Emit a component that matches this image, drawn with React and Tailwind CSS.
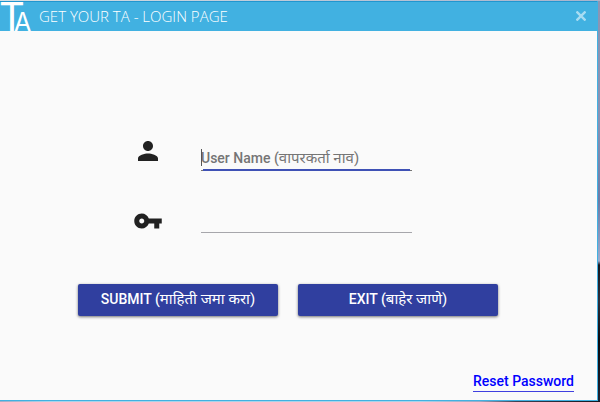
import React from "react";

function PersonIcon() {
  return (
    <svg viewBox="0 0 24 24" className="size-[30px] fill-[#212121]" aria-hidden="true">
      <path d="M12 12c2.21 0 4-1.79 4-4s-1.79-4-4-4-4 1.79-4 4 1.79 4 4 4zm0 2c-2.67 0-8 1.34-8 4v2h16v-2c0-2.66-5.33-4-8-4z" />
    </svg>
  );
}

function KeyIcon() {
  return (
    <svg viewBox="0 0 24 24" className="size-[30px] fill-[#212121]" aria-hidden="true">
      <path d="M12.65 10C11.83 7.67 9.61 6 7 6c-3.31 0-6 2.69-6 6s2.69 6 6 6c2.61 0 4.83-1.67 5.65-4H17v4h4v-4h2v-4H12.65zM7 14c-1.1 0-2-.9-2-2s.9-2 2-2 2 .9 2 2-.9 2-2 2z" />
    </svg>
  );
}

function Logo() {
  return (
    <svg viewBox="0 0 32 29" className="h-[29px] w-8 overflow-visible fill-white font-[Inter,sans-serif]" role="img" aria-label="TA">
      <text x="-1" y="29" fontSize="40">T</text>
      <text x="14" y="29" fontSize="25">A</text>
    </svg>
  );
}

function TitleBar() {
  return (
    <header className="flex h-[30px] items-center border-t border-[#2196cf] bg-[#41b1e1]">
      <Logo />
      <h1 className="ml-[7px] flex-1 pb-0.5 font-['Open_Sans','Noto_Sans',sans-serif] text-[15px] font-light leading-5 text-white">
        GET YOUR TA - LOGIN PAGE
      </h1>
      <button type="button" aria-label="Close" className="mr-2 flex size-4 items-center justify-center pb-0.5">
        <svg viewBox="0 0 10 10" className="size-2.5 stroke-[#a8dcf2]" strokeWidth="2.4" fill="none">
          <path d="M0.5 0.5L9.5 9.5M9.5 0.5L0.5 9.5" />
        </svg>
      </button>
    </header>
  );
}

function Marathi({ children }) {
  return (
    <span lang="mr" className="text-[15px] font-normal">
      {children}
    </span>
  );
}

function ActionButton({ type, children }) {
  return (
    <button
      type={type}
      className="h-8 w-[200px] rounded-[2px] bg-[#303f9f] text-sm font-medium text-white shadow-[0_1px_3px_rgba(0,0,0,0.55)]"
    >
      {children}
    </button>
  );
}

export default function App() {
  return (
    <div className="flex min-h-screen flex-col bg-[#b9cbdc] font-[Roboto,'Noto_Sans',sans-serif]">
      <div className="h-px bg-linear-to-r from-[#d3dfe4] to-[#a9b4cc]" />
      <div className="flex flex-1">
        <div className="flex min-w-0 flex-1 flex-col border-r border-b border-[#41b1e1] bg-[#fafafa]">
          <TitleBar />
          <form className="flex flex-1 flex-col pl-[78px] pr-[23px]" onSubmit={(e) => e.preventDefault()}>
            <div className="mt-[105px] flex items-start">
              <span className="ml-[55px] w-[68px]">
                <PersonIcon />
              </span>
              <div className="relative w-[211px] pt-[9px]">
                <input
                  id="user"
                  type="text"
                  placeholder=" "
                  className="peer block h-[26px] w-full border-b border-[#757575] text-sm font-medium text-[#212121] outline-none"
                />
                <label
                  htmlFor="user"
                  className="invisible absolute bottom-[3px] left-0 text-sm leading-5 font-medium whitespace-nowrap text-[#757575] peer-placeholder-shown:visible"
                >
                  User Name (<Marathi>वापरकर्ता नाव)</Marathi>
                </label>
                <span className="absolute bottom-0 left-0.5 h-0.5 w-[207px] bg-[#3f51b5]" />
                <span className="absolute left-0 top-[13px] h-[17px] w-px bg-[#555555]" />
              </div>
            </div>
            <div className="mt-[35px] flex items-start">
              <label htmlFor="password" aria-label="Password" className="ml-[55px] w-[68px]">
                <KeyIcon />
              </label>
              <input
                id="password"
                type="password"
                className="block h-[27px] w-[211px] border-b border-[#a6a6ab] text-sm outline-none"
              />
            </div>
            <div className="mt-12 flex gap-5">
              <ActionButton type="submit">
                SUBMIT (<Marathi>माहिती जमा करा)</Marathi>
              </ActionButton>
              <ActionButton type="button">
                EXIT (<Marathi>बाहेर जाणे)</Marathi>
              </ActionButton>
            </div>
            <a href="#reset" className="mb-2 mt-auto self-end border-b border-[#4040e0] text-sm font-medium text-[#0000ff]">
              Reset Password
            </a>
          </form>
        </div>
        <div className="w-0.5 bg-[linear-gradient(#8b96b4_0%,#8792b5_30%,#6b7ba8_50%,#9cacce_65%,#14161f_66%,#2b2f3d_75%,#080a10_85%,#1d2130_100%)]" />
      </div>
      <div className="h-px bg-[linear-gradient(90deg,#a4adc6_0%,#a9d3ea_8%,#a9d3ea_70%,#9aa7c4_80%,#3b4255_86%,#14161f_100%)]" />
    </div>
  );
}
